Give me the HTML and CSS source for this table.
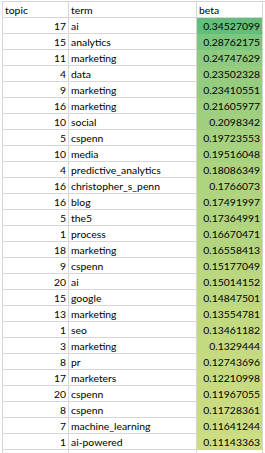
FILE: index.html
```html
<!DOCTYPE html>
<html>
<head>
<meta charset="utf-8">
<link rel="stylesheet" href="styles.css">
</head>
<body>
<div class="sheet">
  <div class="cell">topic</div><div class="cell">term</div><div class="cell">beta</div>
  <div class="cell num">17</div><div class="cell">ai</div><div class="cell num fill" style="background:rgb(99,190,123)">0.34527099</div>
  <div class="cell num">15</div><div class="cell">analytics</div><div class="cell num fill" style="background:rgb(125,198,125)">0.28762175</div>
  <div class="cell num">11</div><div class="cell">marketing</div><div class="cell num fill" style="background:rgb(143,203,126)">0.24747629</div>
  <div class="cell num">4</div><div class="cell">data</div><div class="cell num fill" style="background:rgb(149,204,126)">0.23502328</div>
  <div class="cell num">9</div><div class="cell">marketing</div><div class="cell num fill" style="background:rgb(149,205,126)">0.23410551</div>
  <div class="cell num">16</div><div class="cell">marketing</div><div class="cell num fill" style="background:rgb(157,207,126)">0.21605977</div>
  <div class="cell num">10</div><div class="cell">social</div><div class="cell num fill" style="background:rgb(160,208,127)">0.2098342</div>
  <div class="cell num">5</div><div class="cell">cspenn</div><div class="cell num fill" style="background:rgb(166,209,127)">0.19723553</div>
  <div class="cell num">10</div><div class="cell">media</div><div class="cell num fill" style="background:rgb(167,210,127)">0.19516048</div>
  <div class="cell num">4</div><div class="cell">predictive_analytics</div><div class="cell num fill" style="background:rgb(173,211,127)">0.18086349</div>
  <div class="cell num">16</div><div class="cell">christopher_s_penn</div><div class="cell num fill" style="background:rgb(175,212,127)">0.1766073</div>
  <div class="cell num">16</div><div class="cell">blog</div><div class="cell num fill" style="background:rgb(176,212,127)">0.17491997</div>
  <div class="cell num">5</div><div class="cell">the5</div><div class="cell num fill" style="background:rgb(177,212,127)">0.17364991</div>
  <div class="cell num">1</div><div class="cell">process</div><div class="cell num fill" style="background:rgb(180,213,128)">0.16670471</div>
  <div class="cell num">18</div><div class="cell">marketing</div><div class="cell num fill" style="background:rgb(180,213,128)">0.16558413</div>
  <div class="cell num">9</div><div class="cell">cspenn</div><div class="cell num fill" style="background:rgb(186,215,128)">0.15177049</div>
  <div class="cell num">20</div><div class="cell">ai</div><div class="cell num fill" style="background:rgb(187,215,128)">0.15014152</div>
  <div class="cell num">15</div><div class="cell">google</div><div class="cell num fill" style="background:rgb(188,216,128)">0.14847501</div>
  <div class="cell num">13</div><div class="cell">marketing</div><div class="cell num fill" style="background:rgb(194,217,128)">0.13554781</div>
  <div class="cell num">1</div><div class="cell">seo</div><div class="cell num fill" style="background:rgb(194,217,128)">0.13461182</div>
  <div class="cell num">3</div><div class="cell">marketing</div><div class="cell num fill" style="background:rgb(195,218,129)">0.1329444</div>
  <div class="cell num">8</div><div class="cell">pr</div><div class="cell num fill" style="background:rgb(197,218,129)">0.12743696</div>
  <div class="cell num">17</div><div class="cell">marketers</div><div class="cell num fill" style="background:rgb(200,219,129)">0.12210998</div>
  <div class="cell num">20</div><div class="cell">cspenn</div><div class="cell num fill" style="background:rgb(201,219,129)">0.11967055</div>
  <div class="cell num">8</div><div class="cell">cspenn</div><div class="cell num fill" style="background:rgb(202,220,129)">0.11728361</div>
  <div class="cell num">7</div><div class="cell">machine_learning</div><div class="cell num fill" style="background:rgb(202,220,129)">0.11641244</div>
  <div class="cell num">1</div><div class="cell">ai-powered</div><div class="cell num fill" style="background:rgb(205,221,129)">0.11143363</div>
  <div class="cell"></div><div class="cell"></div><div class="cell"></div>
  <div class="cell"></div><div class="cell"></div><div class="cell"></div>
</div>
</body>
</html>
```
FILE: styles.css
```css
html, body {
  margin: 0;
  padding: 0;
  background: #ffffff;
  overflow: hidden;
}

body {
  font-family: Lato, "Liberation Sans", sans-serif;
  font-size: 10.4px;
  color: #000000;
}

.sheet {
  margin: 1px 0 0 2px;
  border-top: 1px solid #d6d6d6;
  border-left: 1px solid #d6d6d6;
  display: grid;
  grid-template-columns: 66px 128px 66px;
  grid-auto-rows: 16px;
}

.cell {
  box-sizing: border-box;
  border-right: 1px solid #d6d6d6;
  border-bottom: 1px solid #d6d6d6;
  padding: 0 2px 0 2px;
  line-height: 16px;
  white-space: nowrap;
  overflow: hidden;
}

.num {
  text-align: right;
}

.fill {
  border-bottom-color: transparent;
}
```
